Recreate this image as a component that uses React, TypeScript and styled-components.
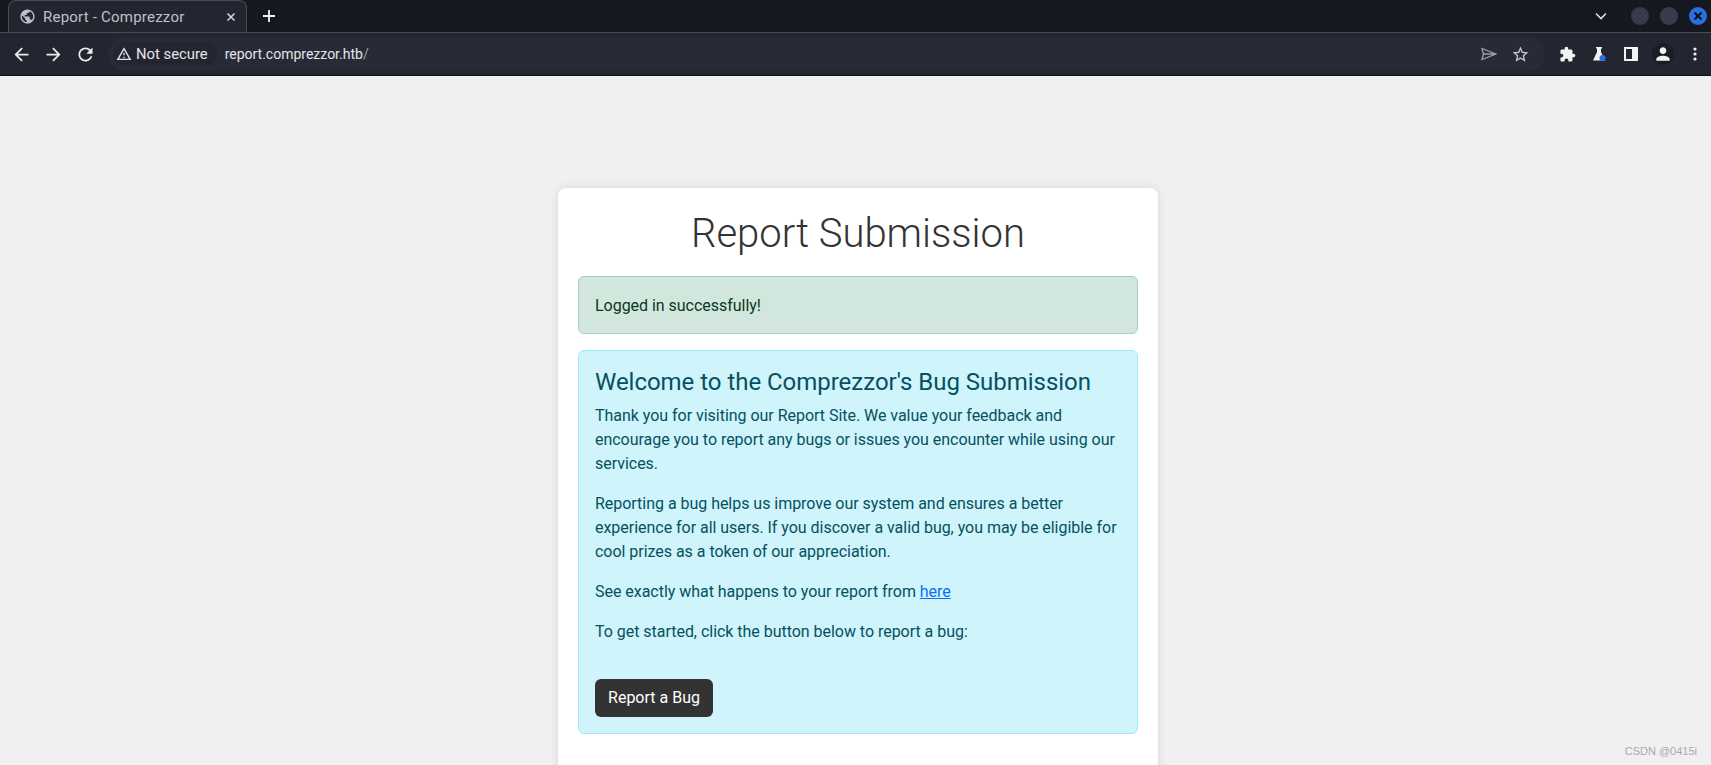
import { createGlobalStyle } from "styled-components";
import styled from "styled-components";

const GlobalStyle = createGlobalStyle`
  html, body {
    margin: 0;
    padding: 0;
    height: 765px;
    overflow: hidden;
    background: #f0f0f0;
    font-family: Roboto, "Noto Sans", sans-serif;
  }
  * { box-sizing: border-box; }
`;

const Page = styled.div`
  position: relative;
  display: flex;
  flex-direction: column;
  height: 765px;
  overflow: hidden;
`;

const TabStrip = styled.div`
  display: flex;
  align-items: flex-end;
  height: 32px;
  flex-shrink: 0;
  padding-left: 8px;
  background: #16181f;
`;

const Tab = styled.div`
  display: flex;
  align-items: center;
  width: 239px;
  height: 32px;
  padding: 0 10px;
  background: #232530;
  border: 1px solid #4a4c55;
  border-bottom: none;
  border-radius: 8px 8px 0 0;
  color: #bfc1c6;
  font-size: 15px;
  letter-spacing: 0.22px;
`;

const TabTitle = styled.span`
  flex: 1;
  margin-left: 7px;
  white-space: nowrap;
`;

const Icon = styled.svg`
  flex-shrink: 0;
  display: block;
  fill: currentColor;
`;

const NewTab = styled.div`
  display: flex;
  align-items: center;
  justify-content: center;
  width: 20px;
  height: 20px;
  margin: 0 0 6px 12px;
`;

const StripRight = styled.div`
  display: flex;
  align-items: center;
  gap: 11px;
  margin-left: auto;
  height: 32px;
  padding-right: 4px;
`;

const Chevron = styled.div`
  margin-right: 13px;
  display: flex;
`;

const WindowDot = styled.div<{ $active?: boolean }>`
  display: flex;
  align-items: center;
  justify-content: center;
  width: 18px;
  height: 18px;
  border-radius: 50%;
  background: ${(p) => (p.$active ? "#2a6fe0" : "#383c4a")};
`;

const Toolbar = styled.div`
  display: flex;
  align-items: center;
  height: 44px;
  flex-shrink: 0;
  padding-left: 11px;
  background: #232530;
  border-top: 1px solid #4a4c55;
  border-bottom: 1px solid #0e0f13;
`;

const NavIcons = styled.div`
  display: flex;
  align-items: center;
  gap: 11px;
  color: #eceded;
`;

const Omnibox = styled.div`
  display: flex;
  align-items: center;
  width: 1437px;
  height: 34px;
  margin-left: 12px;
  background: #282b37;
  border-radius: 17px;
  color: #e4e5e8;
`;

const SecurityChip = styled.div`
  display: flex;
  align-items: center;
  gap: 4px;
  height: 24px;
  padding: 0 9px 0 3px;
  margin-left: 5px;
  border-radius: 12px;
  background: #232530;
  white-space: nowrap;
  font-size: 14.8px;
`;

const Url = styled.span`
  margin-left: 8px;
  font-size: 14px;
  flex: 1;
`;

const UrlSlash = styled.span`
  color: #9da0a8;
`;

const OmniActions = styled.div`
  display: flex;
  align-items: center;
  gap: 14px;
  padding-right: 15px;
  color: #c8cacf;
`;

const Extensions = styled.div`
  display: flex;
  align-items: center;
  margin-left: 6px;
  color: #f2f2f4;
`;

const ExtensionSlot = styled.div`
  display: flex;
  align-items: center;
  justify-content: center;
  width: 32px;
`;

const Avatar = styled.div`
  display: flex;
  align-items: center;
  justify-content: center;
  width: 22px;
  height: 22px;
  border-radius: 50%;
  background: #1c1d24;
`;

const Viewport = styled.main`
  flex: 1;
  display: flex;
  justify-content: center;
  padding: 112px 0 0 5px;
  background: #f0f0f0;
`;

const Card = styled.div`
  width: 600px;
  height: 640px;
  padding: 20px;
  background: #fff;
  border-radius: 8px;
  box-shadow: 0 0 10px rgba(0, 0, 0, 0.1);
  flex-shrink: 0;
`;

const Title = styled.h1`
  margin: 0 0 18px;
  padding-top: 2px;
  text-align: center;
  font-size: 40px;
  font-weight: 300;
  line-height: 48px;
  color: #333;
`;

const Alert = styled.div<{ $kind: "success" | "info" }>`
  padding: 17px 16px 15px;
  margin-bottom: 16px;
  border: 1px solid ${(p) => (p.$kind === "success" ? "#a3cfbb" : "#9eeaf9")};
  border-radius: 6px;
  background: ${(p) => (p.$kind === "success" ? "#d1e7dd" : "#cff4fc")};
  color: ${(p) => (p.$kind === "success" ? "#0a3622" : "#055160")};
  font-size: 16px;
  line-height: 24px;
  letter-spacing: -0.03px;
`;

const AlertHeading = styled.h4`
  margin: 0 0 7px;
  font-size: 24px;
  font-weight: 400;
  line-height: 28.8px;
`;

const Para = styled.p`
  margin: 0 0 16px;
`;

const Link = styled.a`
  color: #0d6efd;
  text-decoration: underline;
`;

const BugButton = styled.button`
  display: block;
  width: 118px;
  height: 38px;
  margin: 35px 0 1px;
  padding: 0;
  border: none;
  border-radius: 6px;
  background: #333;
  color: #fff;
  font-family: inherit;
  font-size: 16px;
  cursor: pointer;
`;

const Watermark = styled.div`
  position: absolute;
  right: 14px;
  bottom: 8px;
  font-family: "Liberation Sans", Arial, sans-serif;
  font-size: 11px;
  color: #a8a8a8;
`;

export default function App() {
  return (
    <Page>
      <GlobalStyle />
      <TabStrip>
        <Tab>
          <Icon width="17" height="17" viewBox="0 0 24 24">
            <path d="M12 2C6.48 2 2 6.48 2 12s4.48 10 10 10 10-4.48 10-10S17.52 2 12 2zm-1 17.93c-3.95-.49-7-3.85-7-7.93 0-.62.08-1.21.21-1.79L9 15v1c0 1.1.9 2 2 2v1.93zm6.9-2.54c-.26-.81-1-1.39-1.9-1.39h-1v-3c0-.55-.45-1-1-1H8v-2h2c.55 0 1-.45 1-1V7h2c1.1 0 2-.9 2-2v-.41c2.93 1.19 5 4.06 5 7.41 0 2.08-.8 3.97-2.1 5.39z" />
          </Icon>
          <TabTitle>Report - Comprezzor</TabTitle>
          <Icon width="10" height="10" viewBox="0 0 10 10">
            <path d="M1.5 1.5l7 7M8.5 1.5l-7 7" stroke="#d8d9dc" strokeWidth="1.5" />
          </Icon>
        </Tab>
        <NewTab>
          <Icon width="14" height="14" viewBox="0 0 14 14">
            <path d="M7 1v12M1 7h12" stroke="#f2f2f4" strokeWidth="1.8" />
          </Icon>
        </NewTab>
        <StripRight>
          <Chevron>
            <Icon width="12" height="8" viewBox="0 0 12 8">
              <path d="M1 1.5l5 5 5-5" stroke="#e0e1e4" strokeWidth="1.6" fill="none" />
            </Icon>
          </Chevron>
          <WindowDot />
          <WindowDot />
          <WindowDot $active>
            <Icon width="10" height="10" viewBox="0 0 10 10">
              <path d="M1.5 1.5l7 7M8.5 1.5l-7 7" stroke="#10131a" strokeWidth="2.2" />
            </Icon>
          </WindowDot>
        </StripRight>
      </TabStrip>
      <Toolbar>
        <NavIcons>
          <Icon width="21" height="21" viewBox="0 0 24 24">
            <path d="M20 11H7.83l5.59-5.59L12 4l-8 8 8 8 1.41-1.41L7.83 13H20v-2z" />
          </Icon>
          <Icon width="21" height="21" viewBox="0 0 24 24">
            <path d="M12 4l-1.41 1.41L16.17 11H4v2h12.17l-5.58 5.59L12 20l8-8z" />
          </Icon>
          <Icon width="21" height="21" viewBox="0 0 24 24">
            <path d="M17.65 6.35C16.2 4.9 14.21 4 12 4c-4.42 0-7.99 3.58-7.99 8s3.57 8 7.99 8c3.73 0 6.84-2.55 7.73-6h-2.08c-.82 2.33-3.04 4-5.65 4-3.31 0-6-2.69-6-6s2.69-6 6-6c1.66 0 3.14.69 4.22 1.78L13 11h7V4l-2.35 2.35z" />
          </Icon>
        </NavIcons>
        <Omnibox>
          <SecurityChip>
            <Icon width="16" height="16" viewBox="0 0 24 24">
              <path d="M1 21h22L12 2 1 21zm3.46-2L12 5.98 19.54 19H4.46zM11 16h2v2h-2zm0-6h2v4h-2z" />
            </Icon>
            Not secure
          </SecurityChip>
          <Url>
            report.comprezzor.htb<UrlSlash>/</UrlSlash>
          </Url>
          <OmniActions>
            <Icon width="16" height="14" viewBox="0 0 16 14">
              <path d="M1 1.5L15 7 1 12.5 2.5 7zM2.5 7H15" stroke="#9da0a8" strokeWidth="1.3" fill="none" />
            </Icon>
            <Icon width="19" height="19" viewBox="0 0 24 24">
              <path d="M22 9.24l-7.19-.62L12 2 9.19 8.63 2 9.24l5.46 4.73L5.82 21 12 17.27 18.18 21l-1.63-7.03L22 9.24zM12 15.4l-3.76 2.27 1-4.28-3.32-2.88 4.38-.38L12 6.1l1.71 4.04 4.38.38-3.32 2.88 1 4.28L12 15.4z" />
            </Icon>
          </OmniActions>
        </Omnibox>
        <Extensions>
          <ExtensionSlot>
            <Icon width="17" height="17" viewBox="0 0 24 24">
              <path d="M20.5 11H19V7c0-1.1-.9-2-2-2h-4V3.5C13 2.12 11.88 1 10.5 1S8 2.12 8 3.5V5H4c-1.1 0-1.99.9-1.99 2v3.8H3.5c1.49 0 2.7 1.21 2.7 2.7s-1.21 2.7-2.7 2.7H2V20c0 1.1.9 2 2 2h3.8v-1.5c0-1.49 1.21-2.7 2.7-2.7 1.49 0 2.7 1.21 2.7 2.7V22H17c1.1 0 2-.9 2-2v-4h1.5c1.38 0 2.5-1.12 2.5-2.5S21.88 11 20.5 11z" />
            </Icon>
          </ExtensionSlot>
          <ExtensionSlot>
            <Icon width="16" height="16" viewBox="0 0 16 16">
              <path d="M5 1h6v1.5h-1v3.5l4 8.5H2l4-8.5V2.5H5z" />
              <circle cx="11.5" cy="12" r="3" fill="#2a6fe0" />
            </Icon>
          </ExtensionSlot>
          <ExtensionSlot>
            <Icon width="14" height="14" viewBox="0 0 14 14">
              <path d="M0 0h14v14H0zM2 2v10h6V2z" fillRule="evenodd" />
            </Icon>
          </ExtensionSlot>
          <ExtensionSlot>
            <Avatar>
              <Icon width="20" height="20" viewBox="0 0 24 24">
                <path d="M12 12c2.21 0 4-1.79 4-4s-1.79-4-4-4-4 1.79-4 4 1.79 4 4 4zm0 2c-2.67 0-8 1.34-8 4v2h16v-2c0-2.66-5.33-4-8-4z" />
              </Icon>
            </Avatar>
          </ExtensionSlot>
          <ExtensionSlot>
            <Icon width="4" height="14" viewBox="0 0 4 14">
              <circle cx="2" cy="2" r="1.6" />
              <circle cx="2" cy="7" r="1.6" />
              <circle cx="2" cy="12" r="1.6" />
            </Icon>
          </ExtensionSlot>
        </Extensions>
      </Toolbar>
      <Viewport>
        <Card>
          <Title>Report Submission</Title>
          <Alert $kind="success">Logged in successfully!</Alert>
          <Alert $kind="info">
            <AlertHeading>Welcome to the Comprezzor's Bug Submission</AlertHeading>
            <Para>
              Thank you for visiting our Report Site. We value your feedback and encourage you to
              report any bugs or issues you encounter while using our services.
            </Para>
            <Para>
              Reporting a bug helps us improve our system and ensures a better experience for all
              users. If you discover a valid bug, you may be eligible for cool prizes as a token of
              our appreciation.
            </Para>
            <Para>
              See exactly what happens to your report from <Link href="#">here</Link>
            </Para>
            <Para>To get started, click the button below to report a bug:</Para>
            <BugButton>Report a Bug</BugButton>
          </Alert>
        </Card>
      </Viewport>
      <Watermark>CSDN @0415i</Watermark>
    </Page>
  );
}
